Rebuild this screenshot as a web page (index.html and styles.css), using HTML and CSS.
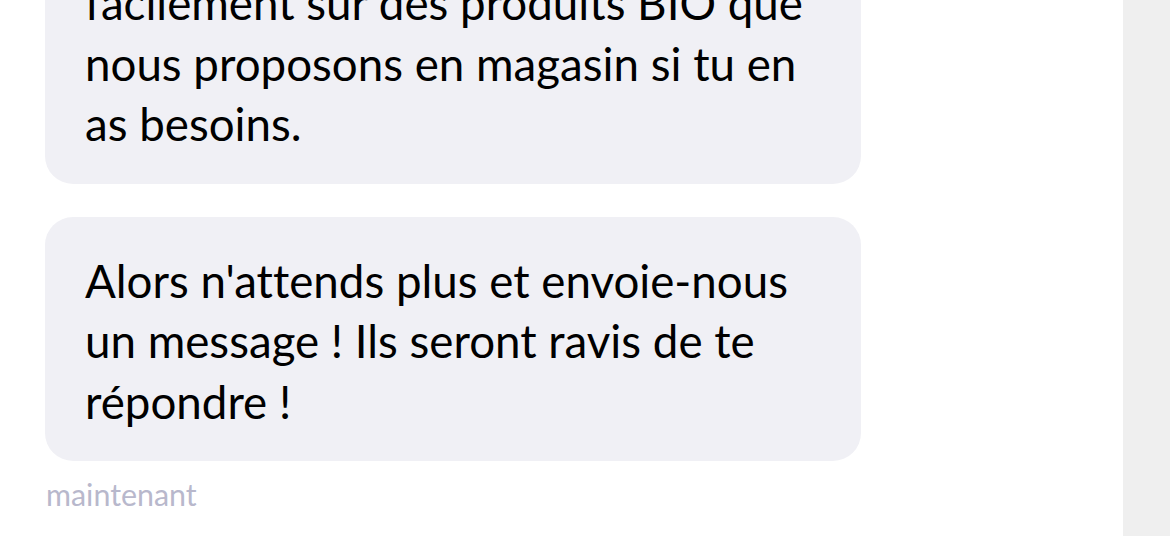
FILE: index.html
```html
<!DOCTYPE html>
<html lang="fr">
<head>
<meta charset="utf-8">
<link rel="stylesheet" href="styles.css">
</head>
<body>
<div class="app">
  <main class="chat">
    <div class="bubble">Tu peux aussi te renseigner facilement sur des produits BIO que nous proposons en magasin si tu en as besoins.</div>
    <div class="bubble">Alors n'attends plus et envoie-nous un message ! Ils seront ravis de te répondre !</div>
    <div class="time">maintenant</div>
  </main>
  <aside class="side"></aside>
</div>
</body>
</html>
```
FILE: styles.css
```css
html, body { margin: 0; padding: 0; height: 100%; }
body {
  background: #fff;
  font-family: Lato, "Open Sans", sans-serif;
  font-variant-ligatures: none;
  color: #000;
  overflow: hidden;
}
.app { display: flex; height: 100vh; }
.chat {
  flex: 1;
  display: flex;
  flex-direction: column;
  justify-content: flex-end;
  align-items: flex-start;
  gap: 33px;
  padding: 0 0 25px 45px;
  overflow: hidden;
  box-shadow: 2px 0 4px rgba(0,0,0,0.04);
}
.bubble {
  width: 816px;
  box-sizing: border-box;
  background: #f0f0f5;
  border-radius: 28px;
  padding: 34px 40px 29px 40px;
  font-size: 45.7px;
  line-height: 60.5px;
  flex-shrink: 0;
}
.time {
  margin-top: -17px;
  font-size: 30.4px;
  color: #b8b8cc;
  line-height: 34px;
  padding-left: 1px;
}
.side { width: 47px; background: #efefef; }
```
